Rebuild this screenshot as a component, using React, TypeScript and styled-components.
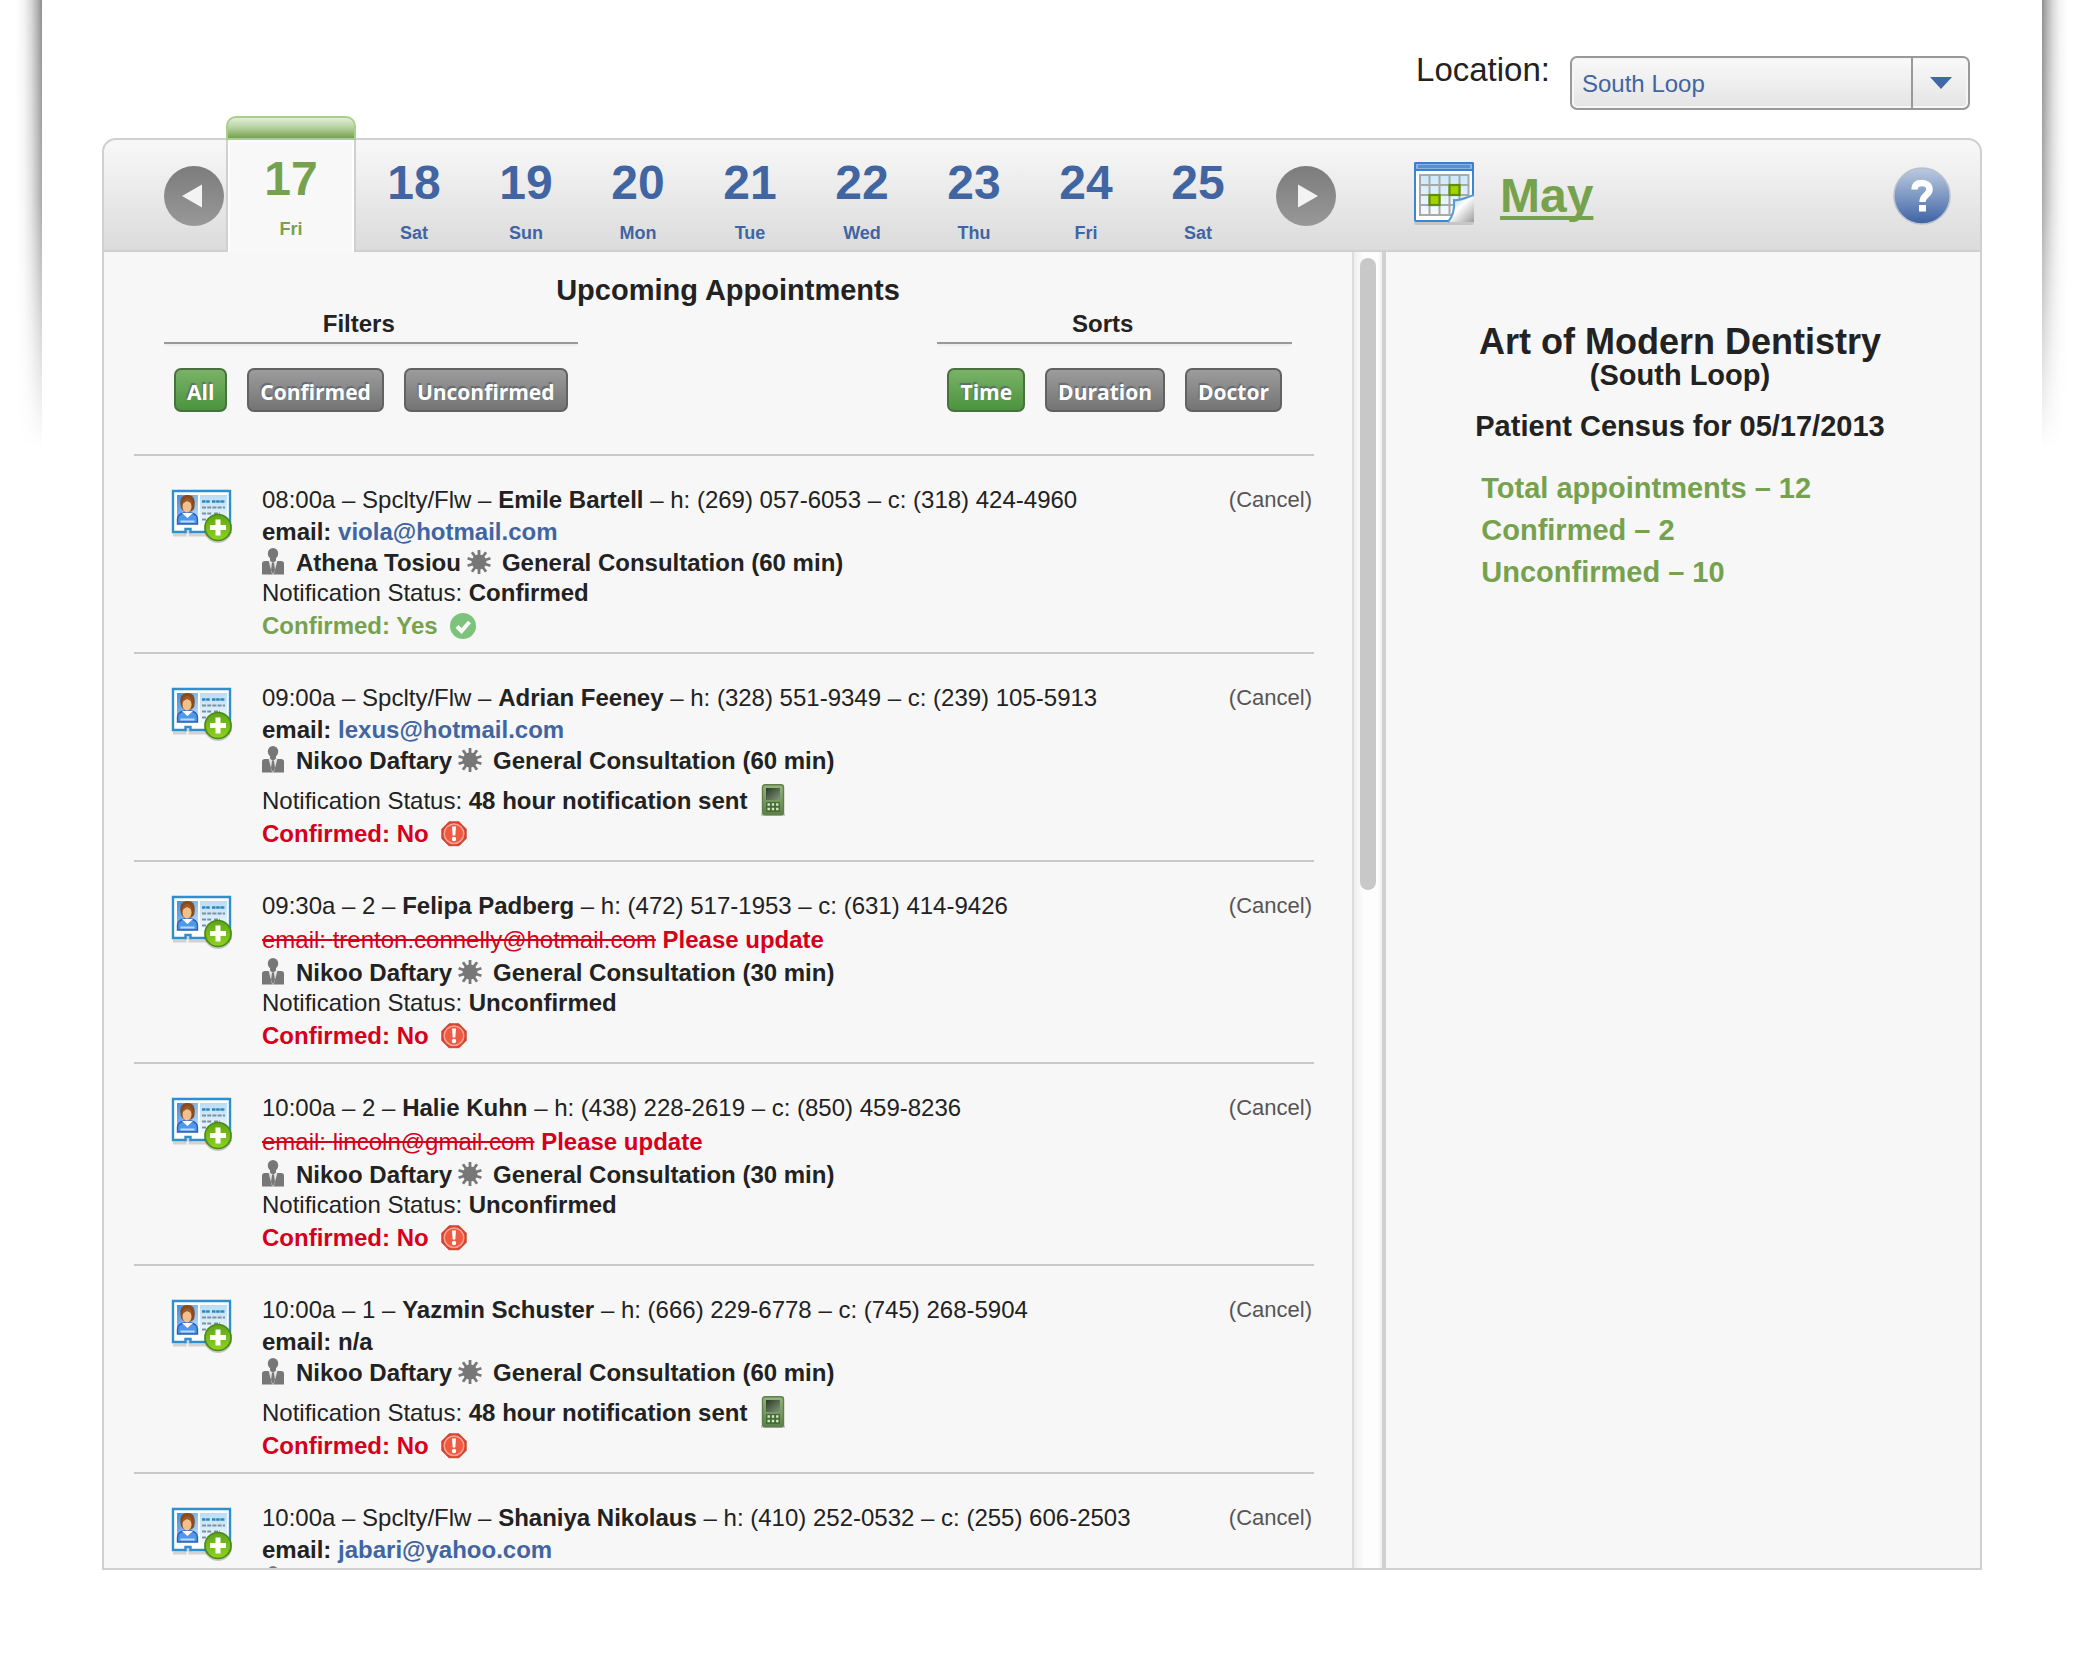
import React from "react";
import styled, { createGlobalStyle, css } from "styled-components";

const color = {
  text: "#222222",
  muted: "#555555",
  blue: "#4065a2",
  green: "#76a24e",
  red: "#d6001c",
  line: "#d0d0d0",
  panel: "#f7f7f7",
};

const GlobalStyle = createGlobalStyle`
  *, *::before, *::after { box-sizing: border-box; }
  body {
    margin: 0;
    background: #ffffff;
    color: ${color.text};
    font-family: "Liberation Sans", Arial, Helvetica, sans-serif;
    font-size: 24px;
    overflow: hidden;
  }
  button { font: inherit; color: inherit; cursor: pointer; }
  svg { display: block; flex: none; }
`;

/* ---------- page frame ---------- */

const Page = styled.div`
  display: grid;
  grid-template-columns: 42px minmax(0, 1fr) 40px;
  min-height: 100vh;
`;

const EdgeShadow = styled.div<{ $side: "left" | "right" }>`
  height: 450px;
  background: linear-gradient(
    to ${(p) => p.$side},
    #8e8e8e 0,
    #b4b4b4 5px,
    #dadada 11px,
    #f4f4f4 18px,
    #ffffff 26px
  );
  mask-image: linear-gradient(to bottom, #000 0, rgba(0, 0, 0, 0.75) 45%, transparent 100%);
`;

const Main = styled.main`
  display: flex;
  flex-direction: column;
  padding: 50px 60px 0;
`;

const LocationBar = styled.div`
  display: flex;
  justify-content: flex-end;
  align-items: flex-start;
  gap: 20px;
  padding: 0 12px 28px 0;
`;

const LocationLabel = styled.label`
  font-size: 33px;
  line-height: 40px;
`;

const SelectBox = styled.div`
  position: relative;
  margin-top: 6px;
`;

const Select = styled.select`
  appearance: none;
  display: block;
  width: 400px;
  height: 54px;
  padding: 0 70px 0 10px;
  border: 2px solid #999999;
  border-radius: 7px;
  background: linear-gradient(#f9f9f9, #e4e4e4);
  box-shadow: inset 0 0 0 2px #f6f6f6;
  color: ${color.blue};
  font: inherit;
`;

const SelectArrow = styled.span`
  position: absolute;
  inset: 2px 2px 2px auto;
  width: 57px;
  display: flex;
  align-items: center;
  justify-content: center;
  border-left: 2px solid #999999;
  pointer-events: none;
`;

/* ---------- calendar header ---------- */

const columns = css`
  display: grid;
  grid-template-columns: minmax(0, 1fr) 598px;
`;

const HeaderBar = styled.header`
  ${columns}
  height: 114px;
  border: 2px solid ${color.line};
  border-radius: 14px 14px 0 0;
  background: linear-gradient(#f8f8f8, #dbdbdb);
`;

const DayNav = styled.nav`
  display: flex;
  align-items: flex-start;
  padding-left: 60px;
`;

const RoundButton = styled.button`
  flex: none;
  width: 60px;
  height: 60px;
  padding: 0;
  border: 0;
  border-radius: 50%;
  background: linear-gradient(#7c7c7c, #989898);
  display: flex;
  align-items: center;
  justify-content: center;
  align-self: center;
`;

const DayList = styled.ul`
  display: flex;
  margin: 0 22px 0 2px;
  padding: 0;
  list-style: none;
`;

const Day = styled.li<{ $active?: boolean }>`
  ${(p) =>
    p.$active
      ? css`
          width: 130px;
          height: 136px;
          margin: -24px 2px -2px 0;
          color: ${color.green};
          &::before {
            content: "";
            display: block;
            height: 24px;
            border: 2px solid #a9cf8a;
            border-radius: 10px 10px 0 0;
            background: linear-gradient(#e3efd9, #b5d09e 50%, #76a24e);
          }
        `
      : css`
          width: 112px;
          color: ${color.blue};
        `}
`;

const DayButton = styled.button<{ $active?: boolean }>`
  display: block;
  width: 100%;
  height: 112px;
  padding: 8px 0 0;
  border: 0;
  background: none;
  text-align: center;
  font-weight: bold;
  ${(p) =>
    p.$active &&
    css`
      padding-top: 0;
      border: solid ${color.line};
      border-width: 0 2px;
      background: #f8f8f8;
      box-shadow: inset 2px 2px 0 #ffffff, inset -2px 0 0 #ffffff;
    `}
`;

const DayNumber = styled.span`
  display: block;
  font-size: 48px;
  line-height: 56px;
`;

const DayName = styled.span`
  display: block;
  margin-top: 10px;
  font-size: 18px;
  line-height: 24px;
`;

const MonthArea = styled.div`
  display: flex;
  align-items: center;
  padding: 0 28px 0 30px;
`;

const MonthLink = styled.a`
  margin: 0 auto 0 24px;
  color: ${color.green};
  font-size: 48px;
  line-height: 56px;
  font-weight: bold;
  text-decoration-thickness: 4px;
  text-underline-offset: 4px;
  text-decoration-skip-ink: none;
`;

const HelpButton = styled.button`
  padding: 0;
  border: 0;
  background: none;
`;

/* ---------- body ---------- */

const Body = styled.div`
  ${columns}
  height: calc(100vh - 354px);
  min-height: 400px;
  margin-bottom: 102px;
  border: solid ${color.line};
  border-width: 0 2px 2px;
  background: ${color.panel};
`;

const ListColumn = styled.div`
  display: flex;
  min-height: 0;
`;

const ListPane = styled.section`
  flex: 1;
  min-width: 0;
  overflow-y: auto;
  scrollbar-width: none;
`;

const ScrollTrack = styled.div`
  flex: none;
  width: 30px;
  padding: 6px;
  border-left: 2px solid #dddddd;
  background: linear-gradient(to right, #eeeeee, #fdfdfd 35%, #fdfdfd 85%, #eeeeee);
`;

const ScrollThumb = styled.div`
  width: 16px;
  height: 48.5%;
  border-radius: 8px;
  background: #c8c8c8;
`;

const ListTitle = styled.h1`
  margin: 0;
  padding-top: 20px;
  font-size: 29px;
  line-height: 36px;
  text-align: center;
`;

const Controls = styled.div`
  display: flex;
  justify-content: space-between;
  margin: 2px 60px 42px;
`;

const ControlGroup = styled.div`
  display: flex;
  flex-direction: column;
`;

const GroupTitle = styled.h2`
  margin: 0;
  padding: 0 24px 4px 0;
  font-size: 24px;
  line-height: 28px;
  text-align: center;
`;

const GroupRule = styled.hr`
  width: 100%;
  height: 4px;
  margin: 0 0 22px;
  border: solid;
  border-width: 2px 0;
  border-color: #999999 transparent #eeeeee;
`;

const ButtonRow = styled.div`
  display: flex;
  gap: 20px;
  padding: 0 10px;
`;

const Pill = styled.button<{ $on?: boolean }>`
  height: 44px;
  padding: 4px 11px 0;
  border: 2px solid ${(p) => (p.$on ? "#4a7040" : "#626262")};
  border-radius: 7px;
  background: ${(p) =>
    p.$on ? "linear-gradient(#7ab267, #4b943f)" : "linear-gradient(#9c9c9c, #747474)"};
  color: #ffffff;
  font-family: "Open Sans", "Noto Sans", sans-serif;
  font-size: 21px;
  font-weight: 700;
  line-height: 28px;
  text-shadow: -1px -2px 1px rgba(90, 95, 105, 0.8);
`;

const Appointments = styled.ul`
  margin: 0 38px 0 30px;
  padding: 0;
  list-style: none;
`;

const Appointment = styled.li`
  display: flex;
  align-items: flex-start;
  gap: 28px;
  padding: 28px 0 8px 36px;
  border-top: 2px solid #c8c8c8;
`;

const CardButton = styled.button`
  flex: none;
  margin-top: 4px;
  padding: 0;
  border: 0;
  background: none;
`;

const Details = styled.div`
  flex: 1;
  min-width: 0;
`;

const Line = styled.div<{ $height: number }>`
  line-height: ${(p) => p.$height}px;
  white-space: pre;
`;

const IconLine = styled.div`
  display: flex;
  align-items: flex-start;
  line-height: 30px;
  font-weight: bold;
`;

const DoctorName = styled.span`
  margin: 0 6px 0 12px;
`;

const ServiceName = styled.span`
  margin-left: 11px;
`;

const NoticeLine = styled.div`
  display: flex;
  align-items: flex-end;
  gap: 14px;
  line-height: 30px;
`;

const PhoneSlot = styled.span`
  padding-top: 8px;
`;

const ConfirmLine = styled.div<{ $yes: boolean }>`
  display: flex;
  align-items: center;
  gap: 12px;
  height: 36px;
  font-weight: bold;
  color: ${(p) => (p.$yes ? color.green : color.red)};
`;

const EmailLink = styled.a`
  color: ${color.blue};
  font-weight: bold;
  text-decoration: none;
`;

const Bounced = styled.span`
  color: ${color.red};
`;

const CancelLink = styled.a`
  padding-right: 2px;
  color: ${color.muted};
  font-size: 22px;
  line-height: 32px;
  text-decoration: none;
`;

/* ---------- census ---------- */

const CensusPanel = styled.aside`
  display: flex;
  justify-content: center;
  align-items: flex-start;
  padding: 70px 6px 0 0;
  border-left: 4px solid ${color.line};
`;

const Census = styled.div`
  font-weight: bold;
`;

const PracticeName = styled.h2`
  margin: 0;
  font-size: 36px;
  line-height: 40px;
  text-align: center;
`;

const CensusText = styled.p`
  margin: 0;
  font-size: 29px;
  line-height: 26px;
  text-align: center;
`;

const CensusDate = styled(CensusText)`
  margin: 25px 0 28px;
`;

const Stats = styled.ul`
  margin: 0;
  padding: 0 0 0 6px;
  list-style: none;
  color: ${color.green};
  font-size: 29px;
  line-height: 42px;
`;

/* ---------- drawings ---------- */

const Triangle = ({ left }: { left?: boolean }) => (
  <svg width="60" height="60" viewBox="0 0 60 60" aria-hidden="true">
    <path d={left ? "M18 30 38 18.500V41.500Z" : "M42 30 22 18.500V41.500Z"} fill="#f3f3f3" />
  </svg>
);

const CalendarIcon = () => (
  <svg width="64" height="72" viewBox="0 0 64 72" aria-hidden="true">
    <defs>
      <linearGradient id="calCell" x1="0" y1="0" x2="0" y2="1">
        <stop offset="0" stopColor="#c9e9fb" />
        <stop offset="1" stopColor="#f6fbff" />
      </linearGradient>
      <linearGradient id="calFold" x1="0" y1="0" x2="1" y2="1">
        <stop offset="0.1" stopColor="#a9cdea" />
        <stop offset="0.45" stopColor="#ffffff" />
        <stop offset="1" stopColor="#9c9c9c" />
      </linearGradient>
    </defs>
    <rect x="2" y="60" width="60" height="5" rx="2" fill="#000" opacity="0.12" />
    <rect x="3" y="3" width="58" height="58" rx="1.500" fill="#fff" stroke="#3a86cf" strokeWidth="2" />
    <rect x="2" y="2" width="60" height="9" rx="1.500" fill="#3d7fcd" />
    <rect x="4" y="4" width="56" height="5" fill="#86b4e8" />
    <rect x="6" y="5" width="52" height="3" fill="#5590d6" />
    <rect x="7" y="14" width="50" height="42" fill="url(#calCell)" />
    <path
      d="M8 14V56M17.500 14V56M27.500 14V56M37.500 14V56M47.500 14V56M56.500 14V56M7 15H57M7 25H57M7 35H57M7 45H57M7 55H57"
      stroke="#a9a9a9"
      strokeWidth="2"
    />
    <rect x="37.500" y="25" width="10" height="10" fill="#a3d200" stroke="#5d8f0a" strokeWidth="2.200" />
    <rect x="17.500" y="35" width="10" height="10" fill="#a3d200" stroke="#5d8f0a" strokeWidth="2.200" />
    <path d="M62 36C52 37 46 40 42 40C43 50 41 56 36 62H62Z" fill="url(#calFold)" />
    <path d="M62 35C53 38 47 41 42 40C43 50 41 56 36 62" fill="none" stroke="#5a9ad4" strokeWidth="2" />
  </svg>
);

const HelpIcon = () => (
  <svg width="60" height="60" viewBox="0 0 60 60" aria-hidden="true">
    <defs>
      <linearGradient id="help" x1="0" y1="0" x2="0" y2="1">
        <stop offset="0" stopColor="#bccae0" />
        <stop offset="0.500" stopColor="#7e98c2" />
        <stop offset="1" stopColor="#3c62a4" />
      </linearGradient>
    </defs>
    <circle cx="30" cy="30" r="28" fill="url(#help)" stroke="#b9c0cc" strokeWidth="1.500" />
    <path
      d="M22.500 23.500C22.500 18.500 26 17 30 17C34.500 17 37.500 19.500 37.500 23.500C37.500 29 30.500 29 30.500 36"
      fill="none"
      stroke="#fff"
      strokeWidth="6.500"
    />
    <rect x="27" y="39" width="7" height="6.500" fill="#fff" />
  </svg>
);

const CardIcon = () => (
  <svg width="64" height="58" viewBox="0 0 64 58" aria-hidden="true">
    <defs>
      <linearGradient id="cardBg" x1="0" y1="0" x2="0" y2="1">
        <stop offset="0" stopColor="#b9ddf5" />
        <stop offset="1" stopColor="#f4faff" />
      </linearGradient>
      <linearGradient id="cardPhoto" x1="0" y1="0" x2="1" y2="1">
        <stop offset="0" stopColor="#3f8ee0" />
        <stop offset="1" stopColor="#c8e4fb" />
      </linearGradient>
      <linearGradient id="cardPlus" x1="0" y1="0" x2="0" y2="1">
        <stop offset="0" stopColor="#5ea51a" />
        <stop offset="1" stopColor="#8fd31d" />
      </linearGradient>
    </defs>
    <path d="M3 47H15V44H20V47H60" fill="none" stroke="#000" strokeWidth="3" opacity="0.150" />
    <path d="M3 3H60V44H20.500V41H15.500V44H3Z" fill="#fff" stroke="#2f8fce" strokeWidth="2.400" />
    <rect x="30" y="7" width="27" height="30" fill="url(#cardBg)" />
    <path d="M32 13.500H40M42 13.500H55" stroke="#2f83bd" strokeWidth="2.400" strokeDasharray="3.500 0.700" />
    <path d="M32 19.500H55M32 25.500H42M44 25.500H50M32 31.500H38" stroke="#7d8fa3" strokeWidth="2" strokeDasharray="4 1.200" />
    <rect x="7" y="7" width="21" height="29" fill="url(#cardPhoto)" />
    <path d="M7.500 36V31Q8 26 14 25H21Q27 26 27.500 31V36Z" fill="#4f97ea" stroke="#2a5fb5" strokeWidth="1.400" />
    <path d="M12 25 17.500 30 23 25Z" fill="#ffffff" />
    <path d="M10.500 33.500H24.500" stroke="#b9dafa" strokeWidth="2" />
    <path d="M11 20C8.500 9 13 7 18 7C24 7 26 13 24 21Q22 24 17.500 24 13 24 11 20Z" fill="#8a4a20" />
    <ellipse cx="17" cy="18.500" rx="4.500" ry="6" fill="#f3c08c" />
    <path d="M12 16Q13 10 18 10 22 11 22 15.500L17 13Z" fill="#9c5a2a" />
    <circle cx="48" cy="41" r="14" fill="#000" opacity="0.200" />
    <circle cx="48" cy="39.500" r="13" fill="url(#cardPlus)" stroke="#4b8a14" strokeWidth="1.600" />
    <path d="M48 31.500V47.500M40 39.500H56" stroke="#fff" strokeWidth="5" />
  </svg>
);

const DoctorIcon = () => (
  <svg width="22" height="27" viewBox="0 0 22 27" aria-hidden="true">
    <ellipse cx="11" cy="5.500" rx="5.200" ry="5.500" fill="#777777" />
    <path d="M0 26.500V15.500Q0 13 3 13H19Q22 13 22 15.500V26.500Z" fill="#777777" />
    <path d="M6.500 12.500H15.500L11.800 26.500H10.200Z" fill="#e4e4e4" />
    <path d="M8 9H14V12.500L11 15 8 12.500ZM10 15H12L13 22 11 26.500 9 22Z" fill="#777777" />
  </svg>
);

const GearIcon = () => (
  <svg width="24" height="27" viewBox="0 0 24 27" aria-hidden="true">
    <g transform="translate(12 14)" stroke="#777777" strokeWidth="2.800">
      {Array.from({ length: 5 }, (_, i) => (
        <path key={i} d="M0 -12V12" transform={`rotate(${i * 36})`} />
      ))}
      <circle r="7.500" fill="#777777" stroke="none" />
    </g>
  </svg>
);

const CheckIcon = () => (
  <svg width="26" height="26" viewBox="0 0 26 26" aria-hidden="true">
    <circle cx="13" cy="13" r="13" fill="#7cc47c" />
    <path d="M7 13.500 11.500 18 19.500 9" fill="none" stroke="#fff" strokeWidth="4" />
  </svg>
);

const AlertIcon = () => (
  <svg width="26" height="26" viewBox="0 0 26 26" aria-hidden="true">
    <path d="M8 0.800H18L25.200 8V17.500L18 24.700H8L0.800 17.500V8Z" fill="#d8432f" stroke="#c94a38" strokeLinejoin="round" />
    <circle cx="13" cy="12.700" r="9.800" fill="#ef5a43" stroke="#f6a294" strokeWidth="1.500" />
    <path d="M11 5.500H15L14.300 14.500H11.700Z" fill="#fff" />
    <circle cx="13" cy="18" r="2.200" fill="#fff" />
  </svg>
);

const PhoneIcon = () => (
  <svg width="24" height="32" viewBox="0 0 24 32" aria-hidden="true">
    <defs>
      <linearGradient id="phone" x1="0" y1="0" x2="0" y2="1">
        <stop offset="0" stopColor="#96b47e" />
        <stop offset="1" stopColor="#5c8048" />
      </linearGradient>
      <linearGradient id="phoneScreen" x1="0" y1="0" x2="1" y2="1">
        <stop offset="0" stopColor="#2c3a26" />
        <stop offset="1" stopColor="#7f967a" />
      </linearGradient>
    </defs>
    <rect x="0" y="29" width="24" height="3" fill="#000" opacity="0.180" />
    <rect x="1.500" y="0.700" width="21" height="30" rx="2.500" fill="url(#phone)" stroke="#5f7f4c" strokeWidth="1.400" />
    <rect x="5" y="4" width="14" height="12" fill="url(#phoneScreen)" />
    <rect x="5" y="18" width="14" height="10" rx="1" fill="#456c33" />
    <path d="M6.500 20.500H17.500M6.500 25H17.500" stroke="#d5e6c8" strokeWidth="2.400" strokeDasharray="2.400 1.900" />
  </svg>
);

/* ---------- data ---------- */

const days: [number, string][] = [
  [17, "Fri"],
  [18, "Sat"],
  [19, "Sun"],
  [20, "Mon"],
  [21, "Tue"],
  [22, "Wed"],
  [23, "Thu"],
  [24, "Fri"],
  [25, "Sat"],
];

type Visit = {
  time: string;
  room: string;
  patient: string;
  home: string;
  cell: string;
  email?: string;
  bounced?: boolean;
  doctor: string;
  minutes: number;
  status: string;
  sms?: boolean;
  confirmed?: boolean;
};

const visits: Visit[] = [
  { time: "08:00a", room: "Spclty/Flw", patient: "Emile Bartell", home: "(269) 057-6053", cell: "(318) 424-4960", email: "viola@hotmail.com", doctor: "Athena Tosiou", minutes: 60, status: "Confirmed", confirmed: true },
  { time: "09:00a", room: "Spclty/Flw", patient: "Adrian Feeney", home: "(328) 551-9349", cell: "(239) 105-5913", email: "lexus@hotmail.com", doctor: "Nikoo Daftary", minutes: 60, status: "48 hour notification sent", sms: true },
  { time: "09:30a", room: "2", patient: "Felipa Padberg", home: "(472) 517-1953", cell: "(631) 414-9426", email: "trenton.connelly@hotmail.com", bounced: true, doctor: "Nikoo Daftary", minutes: 30, status: "Unconfirmed" },
  { time: "10:00a", room: "2", patient: "Halie Kuhn", home: "(438) 228-2619", cell: "(850) 459-8236", email: "lincoln@gmail.com", bounced: true, doctor: "Nikoo Daftary", minutes: 30, status: "Unconfirmed" },
  { time: "10:00a", room: "1", patient: "Yazmin Schuster", home: "(666) 229-6778", cell: "(745) 268-5904", doctor: "Nikoo Daftary", minutes: 60, status: "48 hour notification sent", sms: true },
  { time: "10:00a", room: "Spclty/Flw", patient: "Shaniya Nikolaus", home: "(410) 252-0532", cell: "(255) 606-2503", email: "jabari@yahoo.com", doctor: "Nikoo Daftary", minutes: 60, status: "Unconfirmed" },
];

const EmailLine = ({ visit }: { visit: Visit }) => {
  if (visit.bounced) {
    return (
      <Line $height={36}>
        <Bounced>
          <s>email: {visit.email}</s> <b>Please update</b>
        </Bounced>
      </Line>
    );
  }
  return (
    <Line $height={32}>
      <b>email: </b>
      {visit.email ? <EmailLink href={`mailto:${visit.email}`}>{visit.email}</EmailLink> : <b>n/a</b>}
    </Line>
  );
};

const AppointmentRow = ({ visit }: { visit: Visit }) => (
  <Appointment>
    <CardButton type="button" aria-label={`Open ${visit.patient}`}>
      <CardIcon />
    </CardButton>
    <Details>
      <Line $height={32}>
        {visit.time} – {visit.room} – <b>{visit.patient}</b> – h: {visit.home} – c: {visit.cell}
      </Line>
      <EmailLine visit={visit} />
      <IconLine>
        <DoctorIcon />
        <DoctorName>{visit.doctor}</DoctorName>
        <GearIcon />
        <ServiceName>General Consultation ({visit.minutes} min)</ServiceName>
      </IconLine>
      <NoticeLine>
        <span>
          Notification Status: <b>{visit.status}</b>
        </span>
        {visit.sms && (
          <PhoneSlot>
            <PhoneIcon />
          </PhoneSlot>
        )}
      </NoticeLine>
      <ConfirmLine $yes={!!visit.confirmed}>
        Confirmed: {visit.confirmed ? "Yes" : "No"}
        {visit.confirmed ? <CheckIcon /> : <AlertIcon />}
      </ConfirmLine>
    </Details>
    <CancelLink href="#cancel">(Cancel)</CancelLink>
  </Appointment>
);

const Choices = ({ title, options }: { title: string; options: string[] }) => {
  const [chosen, setChosen] = React.useState(options[0]);
  return (
    <ControlGroup>
      <GroupTitle>{title}</GroupTitle>
      <GroupRule />
      <ButtonRow>
        {options.map((option) => (
          <Pill key={option} type="button" $on={option === chosen} onClick={() => setChosen(option)}>
            {option}
          </Pill>
        ))}
      </ButtonRow>
    </ControlGroup>
  );
};

export default function App() {
  return (
    <>
      <GlobalStyle />
      <Page>
        <EdgeShadow $side="left" />
        <Main>
          <LocationBar>
            <LocationLabel htmlFor="location">Location:</LocationLabel>
            <SelectBox>
              <Select id="location" defaultValue="South Loop">
                <option>South Loop</option>
              </Select>
              <SelectArrow>
                <svg width="22" height="12" viewBox="0 0 22 12" aria-hidden="true">
                  <path d="M0 0H22L11 12Z" fill="#4068a8" />
                </svg>
              </SelectArrow>
            </SelectBox>
          </LocationBar>

          <HeaderBar>
            <DayNav aria-label="Days">
              <RoundButton type="button" aria-label="Previous day">
                <Triangle left />
              </RoundButton>
              <DayList>
                {days.map(([number, name], index) => (
                  <Day key={number} $active={index === 0}>
                    <DayButton type="button" $active={index === 0}>
                      <DayNumber>{number}</DayNumber>
                      <DayName>{name}</DayName>
                    </DayButton>
                  </Day>
                ))}
              </DayList>
              <RoundButton type="button" aria-label="Next day">
                <Triangle />
              </RoundButton>
            </DayNav>
            <MonthArea>
              <CalendarIcon />
              <MonthLink href="#month">May</MonthLink>
              <HelpButton type="button" aria-label="Help">
                <HelpIcon />
              </HelpButton>
            </MonthArea>
          </HeaderBar>

          <Body>
            <ListColumn>
              <ListPane>
                <ListTitle>Upcoming Appointments</ListTitle>
                <Controls>
                  <Choices title="Filters" options={["All", "Confirmed", "Unconfirmed"]} />
                  <Choices title="Sorts" options={["Time", "Duration", "Doctor"]} />
                </Controls>
                <Appointments>
                  {visits.map((visit) => (
                    <AppointmentRow key={visit.patient} visit={visit} />
                  ))}
                </Appointments>
              </ListPane>
              <ScrollTrack>
                <ScrollThumb />
              </ScrollTrack>
            </ListColumn>
            <CensusPanel>
              <Census>
                <PracticeName>Art of Modern Dentistry</PracticeName>
                <CensusText>(South Loop)</CensusText>
                <CensusDate>Patient Census for 05/17/2013</CensusDate>
                <Stats>
                  <li>Total appointments – 12</li>
                  <li>Confirmed – 2</li>
                  <li>Unconfirmed – 10</li>
                </Stats>
              </Census>
            </CensusPanel>
          </Body>
        </Main>
        <EdgeShadow $side="right" />
      </Page>
    </>
  );
}
